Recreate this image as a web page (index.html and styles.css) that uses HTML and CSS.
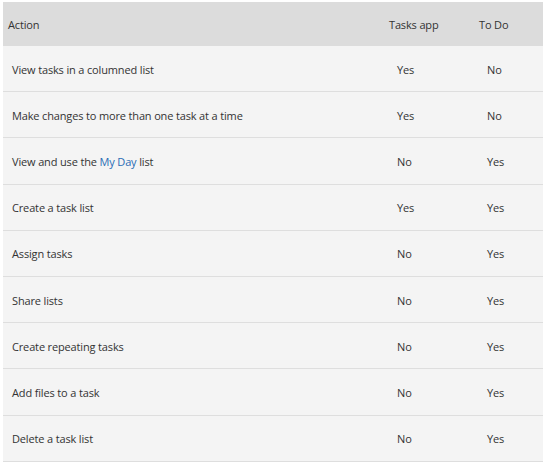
FILE: index.html
```html
<!DOCTYPE html>
<html lang="en">
<head>
  <meta charset="UTF-8">
  <meta name="viewport" content="width=device-width, initial-scale=1.0">
  <link rel="stylesheet" href="styles.css">
  <title>Tasks app and To Do</title>
</head>
<body>
  <div id="compare">
    <div class="row head">
      <div class="cell">Action</div>
      <div class="cell">Tasks app</div>
      <div class="cell">To Do</div>
    </div>
    <div class="row">
      <div class="cell">View tasks in a columned list</div>
      <div class="cell">Yes</div>
      <div class="cell">No</div>
    </div>
    <div class="row">
      <div class="cell">Make changes to more than one task at a time</div>
      <div class="cell">Yes</div>
      <div class="cell">No</div>
    </div>
    <div class="row">
      <div class="cell">View and use the <a href="#">My Day</a> list</div>
      <div class="cell">No</div>
      <div class="cell">Yes</div>
    </div>
    <div class="row">
      <div class="cell">Create a task list</div>
      <div class="cell">Yes</div>
      <div class="cell">Yes</div>
    </div>
    <div class="row">
      <div class="cell">Assign tasks</div>
      <div class="cell">No</div>
      <div class="cell">Yes</div>
    </div>
    <div class="row">
      <div class="cell">Share lists</div>
      <div class="cell">No</div>
      <div class="cell">Yes</div>
    </div>
    <div class="row">
      <div class="cell">Create repeating tasks</div>
      <div class="cell">No</div>
      <div class="cell">Yes</div>
    </div>
    <div class="row">
      <div class="cell">Add files to a task</div>
      <div class="cell">No</div>
      <div class="cell">Yes</div>
    </div>
    <div class="row">
      <div class="cell">Delete a task list</div>
      <div class="cell">No</div>
      <div class="cell">Yes</div>
    </div>
  </div>
</body>
</html>
```

FILE: styles.css
```css
body {
  margin: 0;
  padding: 2px 5px 0 3px;
  background-color: #fff;
  font-family: "Open Sans", Arial, sans-serif;
  font-size: 11px;
  letter-spacing: -0.15px;
  color: #333;
}

#compare {
  display: flex;
  flex-direction: column;
  width: 540px;
}

.row {
  display: grid;
  grid-template-columns: 380px 90px 70px;
  align-items: center;
  height: 46.2px;
  box-sizing: border-box;
  padding-top: 1px;
  background-color: #f4f4f4;
  border-bottom: 1px solid #dedede;
}

.row .cell:first-child {
  padding-left: 9px;
}

.row .cell {
  padding-left: 14px;
}

.row.head {
  height: 44px;
  padding-top: 0;
  background-color: #dcdcdc;
  border-bottom: none;
}

.row.head .cell:first-child {
  padding-left: 5px;
}

.row.head .cell {
  padding-left: 6px;
}

a {
  color: #2a6db5;
  text-decoration: none;
}
```
